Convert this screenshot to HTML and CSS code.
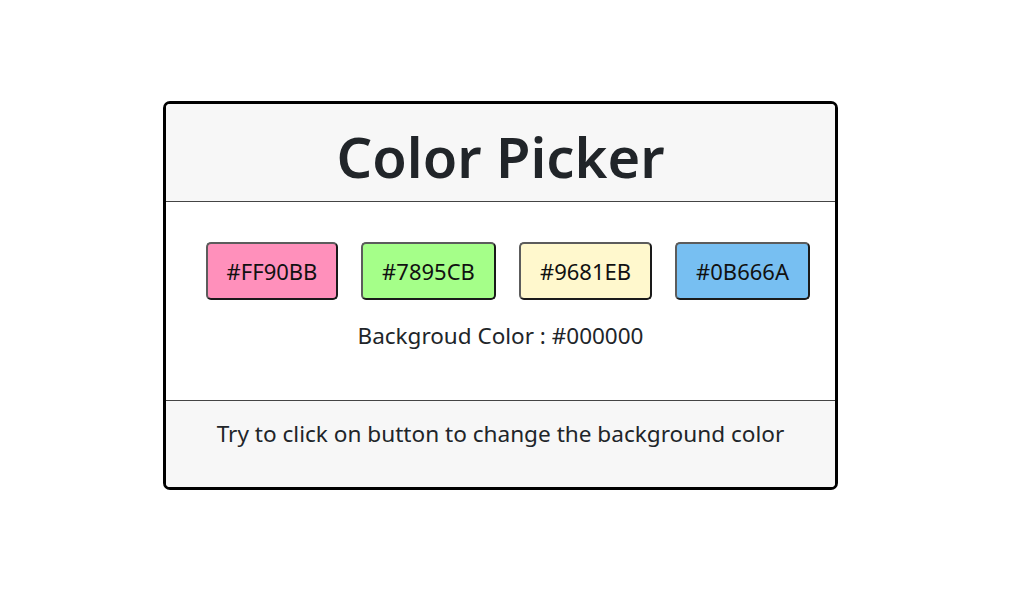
FILE: index.html
```html
<!DOCTYPE html>
<html>
<head>
<meta charset="utf-8">
<link rel="stylesheet" href="styles.css">
</head>
<body>
<div class="page">
  <div class="card">
    <div class="card-header"><h1 class="title">Color Picker</h1></div>
    <div class="card-body">
      <div class="buttons">
        <button class="swatch pink">#FF90BB</button>
        <button class="swatch green">#7895CB</button>
        <button class="swatch yellow">#9681EB</button>
        <button class="swatch blue">#0B666A</button>
      </div>
      <p class="bg-label">Backgroud Color : #000000</p>
    </div>
    <div class="card-footer">Try to click on button to change the background color</div>
  </div>
</div>
</body>
</html>
```

FILE: styles.css
```css
html, body { margin: 0; padding: 0; background: #fff; }
body { font-family: "Noto Sans", "Open Sans", sans-serif; color: #212529; }
.page { padding: 101px 0 0 163px; }
.card {
  width: 675px;
  box-sizing: border-box;
  border: 3px solid #000;
  border-radius: 7px;
  overflow: hidden;
}
.card-header {
  background: #f7f7f7;
  height: 97px;
  border-bottom: 1px solid #444;
  display: flex;
  align-items: center;
  justify-content: center;
}
.title {
  margin: 0;
  font-size: 56px;
  font-weight: 600;
  line-height: 1;
  position: relative;
  top: 3px;
}
.card-body {
  height: 198px;
  background: #fff;
  padding: 40px 0 0 40px;
  box-sizing: border-box;
}
.buttons { display: flex; gap: 23px; }
.swatch {
  height: 58px;
  padding: 0;
  font-family: inherit;
  font-size: 22px;
  color: #111;
  border: 2px solid;
  border-color: #5c5c5c #1a1a1a #1a1a1a #5c5c5c;
  border-radius: 5px;
}
.pink { background: #ff90bb; width: 132px; }
.green { background: #a5ff89; width: 135px; }
.yellow { background: #fff8cd; width: 133px; }
.blue { background: #77bff2; width: 135px; }
.bg-label {
  margin: 22px 0 0 -40px;
  text-align: center;
  font-size: 22.5px;
  line-height: 28px;
}
.card-footer {
  background: #f7f7f7;
  height: 87px;
  border-top: 1px solid #444;
  box-sizing: border-box;
  text-align: center;
  font-size: 22.6px;
  line-height: 28px;
  padding-top: 19px;
}
```
